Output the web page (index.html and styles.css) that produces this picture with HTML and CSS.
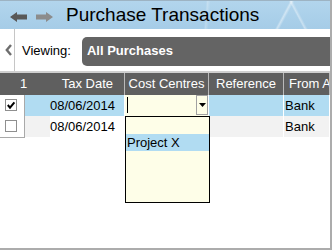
FILE: index.html
```html
<!DOCTYPE html>
<html lang="en">
<head>
    <meta charset="UTF-8">
    <title>Purchase Transactions</title>
    <link rel="stylesheet" href="styles.css">
</head>
<body>
    <div class="window">
        <header class="titlebar">
            <svg class="nav-arrow back" viewBox="0 0 17 10" width="17" height="10">
                <polygon points="0,5 7,0 7,2.5 17,2.5 17,7.5 7,7.5 7,10" fill="#585858"/>
            </svg>
            <svg class="nav-arrow fwd" viewBox="0 0 17 10" width="17" height="10">
                <polygon points="17,5 10,0 10,2.5 0,2.5 0,7.5 10,7.5 10,10" fill="#8c8c8c"/>
            </svg>
            <h1 class="title">Purchase Transactions</h1>
        </header>

        <div class="viewbar">
            <div class="side-tab">
                <svg viewBox="0 0 7 12" width="7" height="12">
                    <polyline points="6,1 1.8,6 6,11" fill="none" stroke="#6e6e6e" stroke-width="2.4"/>
                </svg>
            </div>
            <span class="view-label">Viewing:</span>
            <div class="view-select">All Purchases</div>
        </div>

        <div class="grid">
            <div class="row head">
                <div class="cell c-check">1</div>
                <div class="cell c-date">Tax Date</div>
                <div class="cell c-cost">Cost Centres</div>
                <div class="cell c-ref">Reference</div>
                <div class="cell c-from">From Account</div>
            </div>

            <div class="row selected">
                <div class="cell c-check">
                    <span class="checkbox">
                        <svg viewBox="0 0 10 10" width="10" height="10">
                            <polyline points="1.8,5 4,7.6 8.4,2.4" fill="none" stroke="#000" stroke-width="2"/>
                        </svg>
                    </span>
                </div>
                <div class="cell c-date">08/06/2014</div>
                <div class="cell c-cost editor">
                    <span class="caret"></span>
                    <span class="drop-btn">
                        <svg viewBox="0 0 7 4" width="7" height="4">
                            <polygon points="0,0 7,0 3.5,4" fill="#000"/>
                        </svg>
                    </span>
                    <!-- open list of the cost centre editor -->
                    <div class="drop-list">
                        <div class="drop-item"></div>
                        <div class="drop-item active">Project X</div>
                    </div>
                </div>
                <div class="cell c-ref"></div>
                <div class="cell c-from">Bank</div>
            </div>

            <div class="row alt">
                <div class="cell c-check last"><span class="checkbox"></span></div>
                <div class="cell c-date">08/06/2014</div>
                <div class="cell c-cost"></div>
                <div class="cell c-ref"></div>
                <div class="cell c-from">Bank</div>
            </div>
        </div>
    </div>
</body>
</html>
```

FILE: styles.css
```css
body {
    margin: 0;
    font-family: "Liberation Sans", Arial, sans-serif;
    font-size: 13px;
    color: #000;
    background: #fff;
}
.window {
    width: 332px;
    height: 250px;
    box-sizing: border-box;
    border-right: 2px solid #acacac;
    border-bottom: 2px solid #acacac;
    overflow: hidden;
}

/* title bar */
.titlebar {
    height: 29px;
    box-sizing: border-box;
    border-top: 1px solid #9db3c3;
    display: flex;
    align-items: center;
    background:
        linear-gradient(118deg, transparent 84%, rgba(255,255,255,0.45) 84.6%, transparent 85.4%),
        linear-gradient(62deg, transparent 88%, rgba(255,255,255,0.4) 88.5%, transparent 89.3%),
        linear-gradient(95deg, transparent 62%, rgba(255,255,255,0.25) 62.5%, transparent 63.4%),
        linear-gradient(180deg, #b2d5ed, #a5cce7);
}
.nav-arrow {
    display: block;
    flex: none;
}
.nav-arrow.back {
    margin-left: 10px;
    margin-top: 3px;
}
.nav-arrow.fwd {
    margin-left: 9px;
    margin-top: 3px;
}
.title {
    margin: 0 0 0 13px;
    font-size: 19px;
    font-weight: normal;
    line-height: 28px;
    white-space: nowrap;
}

/* viewing bar */
.viewbar {
    height: 42px;
    display: flex;
    align-items: center;
    border-bottom: 2px solid #cfcfcf;
}
.side-tab {
    width: 14px;
    align-self: stretch;
    border-right: 1px solid #c6c6c6;
    display: flex;
    align-items: center;
    padding-left: 5px;
    box-sizing: content-box;
    width: 9px;
}
.view-label {
    margin-left: 7px;
}
.view-select {
    flex: 1;
    margin-left: 11px;
    margin-top: 2px;
    height: 29px;
    padding-left: 5px;
    line-height: 28px;
    background: #646464;
    border-radius: 5px 0 0 5px;
    color: #fff;
    font-weight: bold;
}

/* grid */
.row {
    display: grid;
    grid-template-columns: 25px 100px 84px 75px 1fr;
    height: 21px;
    line-height: 21px;
}
.row.head {
    height: 22px;
    line-height: 22px;
    background: #5f5f5f;
    color: #fff;
}
.cell {
    box-sizing: border-box;
    border-right: 1px solid #fff;
    white-space: nowrap;
    overflow: hidden;
}
.head .cell {
    border-right-color: #b9b9b9;
}
.c-check {
    background: #fff;
    border-right-color: #a9a9a9;
}
.head .c-check {
    background: none;
    border-right: 0;
    padding-left: 20px;
    overflow: visible;
}
.c-date {
    text-align: right;
    padding-right: 9px;
}
.head .c-date {
    padding-right: 11px;
}
.head .c-cost,
.head .c-ref {
    text-align: center;
}
.c-from {
    padding-left: 1px;
}
.head .c-from {
    padding-left: 5px;
}
.selected {
    background: #b1dcf2;
}
.alt {
    background: #f2f2f2;
}
.alt .c-date {
    background: linear-gradient(to right, #f2f2f2 25px, #fff 25px);
}
.c-check.last {
    box-shadow: 0 1px 0 #a9a9a9;
}

.checkbox {
    display: block;
    width: 12px;
    height: 12px;
    box-sizing: border-box;
    margin: 4px 0 0 5px;
    border: 1px solid #8f8f8f;
    background: #fff;
}
.checkbox svg {
    display: block;
}

/* cost centre editor */
.editor {
    position: relative;
    overflow: visible;
    display: flex;
    background: #fefee8;
}
.caret {
    width: 1px;
    height: 16px;
    margin: 2px 0 0 2px;
    background: #000;
}
.drop-btn {
    margin-left: auto;
    width: 12px;
    height: 20px;
    box-sizing: border-box;
    border: 1px solid #a2a2a2;
    display: flex;
    align-items: center;
    justify-content: center;
}
.drop-btn svg {
    display: block;
}
.drop-list {
    position: absolute;
    top: 21px;
    left: 0;
    z-index: 2;
    width: 85px;
    height: 87px;
    box-sizing: border-box;
    border: 1px solid #000;
    background: #fefee8;
}
.drop-item {
    height: 17px;
    line-height: 17px;
    padding-left: 1px;
}
.drop-item.active {
    background: #b1dcf2;
}
```
